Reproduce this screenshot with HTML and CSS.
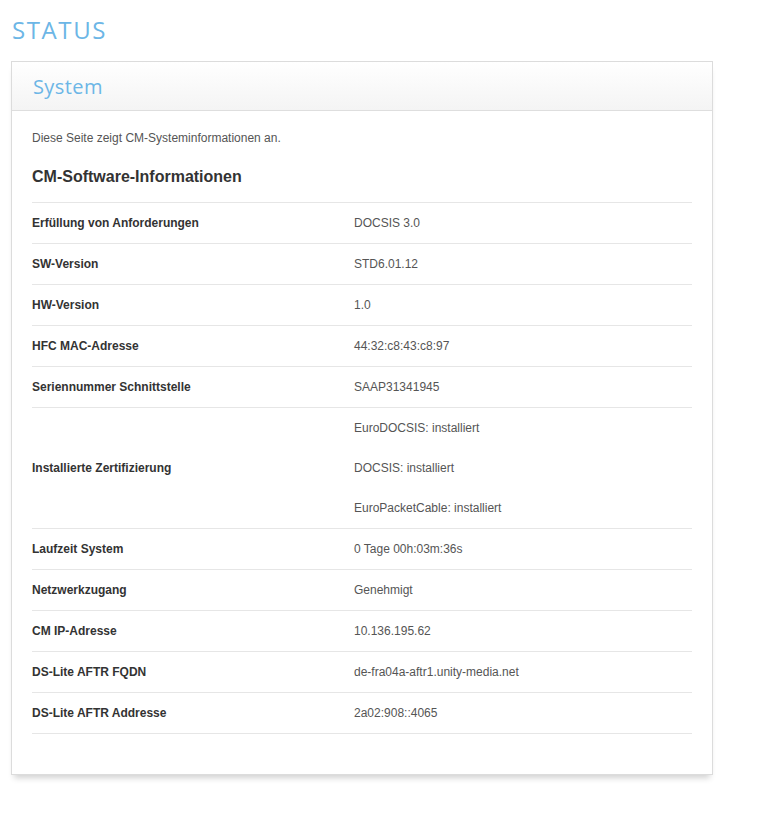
FILE: index.html
```html
<!DOCTYPE html>
<html lang="de">
<head>
<meta charset="utf-8">
<title>Status - System</title>
<link rel="stylesheet" href="styles.css">
</head>
<body>
<h1 class="page-title">STATUS</h1>
<div class="card">
  <div class="card-header"><h2 class="card-title">System</h2></div>
  <div class="card-body">
    <p class="intro">Diese Seite zeigt CM-Systeminformationen an.</p>
    <h3 class="section-title">CM-Software-Informationen</h3>
    <table class="info">
      <tr><th>Erfüllung von Anforderungen</th><td>DOCSIS 3.0</td></tr>
      <tr><th>SW-Version</th><td>STD6.01.12</td></tr>
      <tr><th>HW-Version</th><td>1.0</td></tr>
      <tr><th>HFC MAC-Adresse</th><td>44:32:c8:43:c8:97</td></tr>
      <tr><th>Seriennummer Schnittstelle</th><td>SAAP31341945</td></tr>
      <tr class="multi"><th>Installierte Zertifizierung</th><td><div class="line">EuroDOCSIS: installiert</div><div class="line">DOCSIS: installiert</div><div class="line">EuroPacketCable: installiert</div></td></tr>
      <tr><th>Laufzeit System</th><td>0 Tage 00h:03m:36s</td></tr>
      <tr><th>Netzwerkzugang</th><td>Genehmigt</td></tr>
      <tr><th>CM IP-Adresse</th><td>10.136.195.62</td></tr>
      <tr><th>DS-Lite AFTR FQDN</th><td>de-fra04a-aftr1.unity-media.net</td></tr>
      <tr><th>DS-Lite AFTR Addresse</th><td>2a02:908::4065</td></tr>
    </table>
  </div>
</div>
</body>
</html>
```

FILE: styles.css
```css
html, body {
  margin: 0;
  padding: 0;
  background: #fff;
}
body {
  font-family: "Liberation Sans", Arial, sans-serif;
  width: 762px;
  height: 813px;
  overflow: hidden;
}
.page-title {
  margin: 0;
  padding: 16px 0 0 12px;
  height: 45px;
  box-sizing: border-box;
  font-family: "Open Sans", "DejaVu Sans", sans-serif;
  font-weight: 500;
  font-size: 24px;
  line-height: 28px;
  letter-spacing: 1.6px;
  color: #6cb6e6;
}
.card {
  margin: 16px 0 0 11px;
  width: 702px;
  box-sizing: border-box;
  border: 1px solid #dcdcdc;
  background: #fff;
  box-shadow: 0 6px 6px -3px rgba(0,0,0,0.18);
}
.card-header {
  height: 48px;
  border-bottom: 1px solid #dedede;
  background: linear-gradient(to bottom, #ffffff 0%, #f4f4f4 100%);
  display: flex;
  align-items: center;
  padding-left: 21px;
}
.card-title {
  margin: 0;
  font-family: "Open Sans", "DejaVu Sans", sans-serif;
  font-weight: 500;
  font-size: 20px;
  letter-spacing: 0.4px;
  color: #6cb6e6;
}
.card-body {
  padding: 19px 20px 40px 20px;
}
.intro {
  margin: 0;
  font-size: 12px;
  line-height: 16px;
  color: #555;
}
.section-title {
  margin: 0;
  padding-top: 21px;
  height: 56px;
  box-sizing: border-box;
  font-size: 16px;
  line-height: 19px;
  font-weight: bold;
  color: #333;
}
.info {
  width: 100%;
  border-collapse: collapse;
  border-top: 1px solid #e6e6e6;
}
.info tr {
  border-bottom: 1px solid #e6e6e6;
}
.info th, .info td {
  height: 40px;
  padding: 0;
  font-size: 12px;
  vertical-align: middle;
  text-align: left;
}
.info th {
  width: 322px;
  font-weight: bold;
  color: #333;
}
.info td {
  color: #555;
}
.info .line {
  height: 40px;
  line-height: 40px;
}
```
